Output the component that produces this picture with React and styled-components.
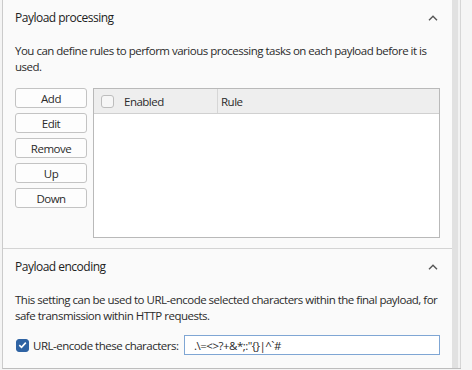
import React from 'react';
import styled, { createGlobalStyle } from 'styled-components';

const GlobalStyle = createGlobalStyle`
  html, body {
    margin: 0;
    padding: 0;
    background: #f4f4f4;
  }
  * {
    box-sizing: border-box;
  }
`;

const Page = styled.div`
  display: flex;
  width: 472px;
  height: 370px;
  overflow: hidden;
  font-family: 'Open Sans', 'Noto Sans', sans-serif;
  font-stretch: 88%;
  letter-spacing: -0.5px;
  font-size: 11.5px;
  color: #2b2b2b;
`;

const Panel = styled.div`
  width: 450px;
  height: 369px;
  margin-left: 2px;
  border-left: 1px solid #cbcbcb;
  border-bottom: 1px solid #bdbdbd;
  background: #fafafa;
  display: flex;
  flex-direction: column;
`;

const Gutter = styled.div`
  display: flex;
  height: 369px;
  border-bottom: 1px solid #bdbdbd;
`;

const Track = styled.div`
  width: 6px;
  background: #e1e1e1;
`;

const Gap = styled.div`
  width: 2px;
  background: #f2f2f2;
`;

const Rule = styled.div`
  width: 1px;
  background: #d6d6d6;
`;

const Side = styled.div`
  flex: 1;
  background: #f5f5f5;
`;

const Section = styled.section`
  padding: 0 12px 0 12px;
  border-bottom: ${p => (p.$last ? 'none' : '1px solid #d4d4d4')};
  flex: ${p => (p.$last ? '1' : 'none')};
`;

const Header = styled.div`
  display: flex;
  align-items: center;
  justify-content: space-between;
  height: 35px;
  padding: 0 2px 0 0;
  font-size: 12px;
`;

const Title = styled.span`
  color: #222;
`;

const Description = styled.p`
  margin: 8px 0 0;
  line-height: 16px;
  white-space: nowrap;
`;

const Body = styled.div`
  display: flex;
  gap: 6px;
  margin-top: 13px;
  padding-bottom: 10px;
`;

const Buttons = styled.div`
  display: flex;
  flex-direction: column;
  gap: 5px;
`;

const Button = styled.button`
  width: 72px;
  height: 20px;
  padding: 0;
  font-family: inherit;
  font-stretch: inherit;
  letter-spacing: inherit;
  font-size: 11.5px;
  color: #2b2b2b;
  background: #fdfdfd;
  border: 1px solid #c3c3c3;
  border-radius: 3px;
`;

const Table = styled.div`
  width: 348px;
  height: 150px;
  border: 1px solid #b9b9b9;
  background: #fff;
`;

const TableHead = styled.div`
  display: flex;
  height: 25px;
  background: #eeeeee;
  border-bottom: 1px solid #d0d0d0;
`;

const HeadCell = styled.div`
  display: flex;
  align-items: center;
  gap: 10px;
  width: ${p => p.$width || 'auto'};
  flex: ${p => (p.$width ? 'none' : '1')};
  padding-left: ${p => p.$pad || '3px'};
  border-right: ${p => (p.$divider ? '1px solid #d6d6d6' : 'none')};
`;

const Box = styled.span`
  width: 13px;
  height: 13px;
  border: 1px solid #bdbdbd;
  border-radius: 3px;
  background: #f6f6f6;
  display: inline-flex;
  align-items: center;
  justify-content: center;
`;

const CheckedBox = styled(Box)`
  background: #2f63a3;
  border-color: #2f63a3;
`;

const OptionRow = styled.div`
  display: flex;
  align-items: center;
  margin-top: 11px;
  padding-left: 1px;
`;

const Label = styled.span`
  margin-left: 4px;
  width: 151px;
  white-space: nowrap;
`;

const Input = styled.div`
  width: 256px;
  height: 20px;
  border: 1px solid #7fa6d4;
  background: #fff;
  padding-left: 9px;
  display: flex;
  align-items: center;
  white-space: pre;
`;

const Chevron = () => (
  <svg width="10" height="6" viewBox="0 0 10 6">
    <path d="M1 5.2 L5 1.2 L9 5.2" fill="none" stroke="#555" strokeWidth="1.4" />
  </svg>
);

const Tick = () => (
  <svg width="9" height="8" viewBox="0 0 9 8">
    <path d="M1.3 4.2 L3.5 6.3 L7.8 1.6" fill="none" stroke="#fff" strokeWidth="1.6" />
  </svg>
);

export default function App() {
  return (
    <Page>
      <GlobalStyle />
      <Panel>
        <Section>
          <Header>
            <Title>Payload processing</Title>
            <Chevron />
          </Header>
          <Description>
            You can define rules to perform various processing tasks on each payload before it is
            <br />
            used.
          </Description>
          <Body>
            <Buttons>
              <Button>Add</Button>
              <Button>Edit</Button>
              <Button>Remove</Button>
              <Button>Up</Button>
              <Button>Down</Button>
            </Buttons>
            <Table>
              <TableHead>
                <HeadCell $width="124px" $pad="7px" $divider>
                  <Box />
                  Enabled
                </HeadCell>
                <HeadCell>Rule</HeadCell>
              </TableHead>
            </Table>
          </Body>
        </Section>
        <Section $last>
          <Header>
            <Title>Payload encoding</Title>
            <Chevron />
          </Header>
          <Description>
            This setting can be used to URL-encode selected characters within the final payload, for
            <br />
            safe transmission within HTTP requests.
          </Description>
          <OptionRow>
            <CheckedBox>
              <Tick />
            </CheckedBox>
            <Label>URL-encode these characters:</Label>
            <Input>{'.\\=<>?+&*;:"{}|^`#'}</Input>
          </OptionRow>
        </Section>
      </Panel>
      <Gutter>
        <Track />
        <Gap />
        <Rule />
      </Gutter>
      <Side />
    </Page>
  );
}
